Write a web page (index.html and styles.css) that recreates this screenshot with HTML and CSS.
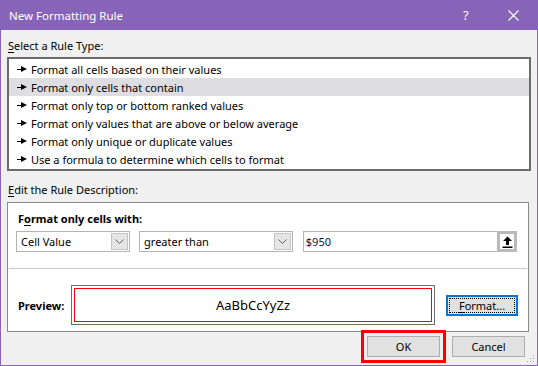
FILE: index.html
```html
<!DOCTYPE html>
<html lang="en">
  <head>
    <meta charset="utf-8" />
    <title>New Formatting Rule</title>
    <link rel="stylesheet" href="styles.css">
  </head>
  <body>
    <div class="dialog">
      <header class="titlebar">
        <span class="title">New Formatting Rule</span>
        <span class="title-help">?</span>
        <span class="title-close">
          <svg width="11" height="11" viewBox="0 0 11 11"><path d="M0.5 0.5L10.5 10.5M10.5 0.5L0.5 10.5" stroke="#fff" stroke-width="1.1" fill="none"/></svg>
        </span>
      </header>

      <div class="dialog-body">
        <div class="caption"><u>S</u>elect a Rule Type:</div>
        <ul class="rule-list">
          <li class="rule"><span class="rule-arrow"></span>Format all cells based on their values</li>
          <li class="rule selected"><span class="rule-arrow"></span>Format only cells that contain</li>
          <li class="rule"><span class="rule-arrow"></span>Format only top or bottom ranked values</li>
          <li class="rule"><span class="rule-arrow"></span>Format only values that are above or below average</li>
          <li class="rule"><span class="rule-arrow"></span>Format only unique or duplicate values</li>
          <li class="rule"><span class="rule-arrow"></span>Use a formula to determine which cells to format</li>
        </ul>

        <div class="caption caption-edit"><u>E</u>dit the Rule Description:</div>
        <div class="desc-box">
          <div class="desc-top">
            <div class="desc-heading">F<u>o</u>rmat only cells with:</div>
            <div class="desc-controls">
              <div class="combo combo-field">
                <span class="combo-text">Cell Value</span>
                <span class="combo-btn"><svg width="9" height="5" viewBox="0 0 9 5"><path d="M0.5 0.5L4.5 4.5L8.5 0.5" stroke="#606060" fill="none"/></svg></span>
              </div>
              <div class="combo combo-op">
                <span class="combo-text">greater than</span>
                <span class="combo-btn"><svg width="9" height="5" viewBox="0 0 9 5"><path d="M0.5 0.5L4.5 4.5L8.5 0.5" stroke="#606060" fill="none"/></svg></span>
              </div>
              <div class="ref-input">
                <span class="ref-text">$950</span>
                <span class="ref-btn"><svg width="11" height="12" viewBox="0 0 11 12"><path d="M5.5 0.5L10 5H7V9H4V5H1Z" fill="#000"/><rect x="0.5" y="10.5" width="10" height="1.5" fill="#000"/></svg></span>
              </div>
            </div>
          </div>
          <div class="desc-preview">
            <span class="preview-label">Preview:</span>
            <div class="preview-box">
              <div class="preview-inner">AaBbCcYyZz</div>
            </div>
            <button class="btn btn-format"><span class="focus-rect"><u>F</u>ormat...</span></button>
          </div>
        </div>

        <div class="dialog-buttons">
          <button class="btn btn-ok">OK</button>
          <button class="btn btn-cancel">Cancel</button>
        </div>
      </div>

      <svg class="grip" width="8" height="8" viewBox="0 0 8 8">
        <rect x="6" y="0" width="1" height="1" fill="#a0a0a0"/>
        <rect x="3" y="3" width="1" height="1" fill="#a0a0a0"/>
        <rect x="6" y="3" width="1" height="1" fill="#a0a0a0"/>
        <rect x="0" y="6" width="1" height="1" fill="#a0a0a0"/>
        <rect x="3" y="6" width="1" height="1" fill="#a0a0a0"/>
        <rect x="6" y="6" width="1" height="1" fill="#a0a0a0"/>
      </svg>
    </div>
  </body>
</html>
```

FILE: styles.css
```css
html, body {
  margin: 0;
  padding: 0;
}

body {
  font-family: "Noto Sans", "Open Sans", sans-serif;
  font-size: 11px;
  color: #000;
  background: #f0f0f0;
}

u {
  text-decoration-thickness: 1px;
  text-underline-offset: 2px;
}

.dialog {
  position: relative;
  width: 538px;
  height: 366px;
  box-sizing: border-box;
  border: 1px solid #8764b8;
  border-top: none;
  background: #f0f0f0;
}

.titlebar {
  display: flex;
  align-items: center;
  height: 30px;
  margin: 0 -1px;
  padding-left: 9px;
  background: #8764b8;
  color: #fff;
  font-size: 11.5px;
}

.title {
  flex: 1;
}

.title-help {
  width: 12px;
  margin-right: 33px;
  font-size: 13px;
}

.title-close {
  display: flex;
  margin-right: 19px;
}

.dialog-body {
  padding: 8px 11px 0 6px;
}

.caption {
  line-height: 16px;
  padding-left: 1px;
}

.rule-list {
  list-style: none;
  margin: 3px 0 0;
  padding: 1px 0 1px;
  height: 108px;
  background: #fff;
  border: 2px solid #6b6b6b;
  width: 520px;
}

.rule {
  display: flex;
  align-items: center;
  height: 18px;
  padding-left: 8px;
}

.rule.selected {
  background: #dedee2;
}

.rule-arrow {
  position: relative;
  width: 10px;
  height: 7px;
  margin-right: 4px;
}

.rule-arrow::before {
  content: "";
  position: absolute;
  left: 0;
  top: 3px;
  width: 5px;
  height: 1px;
  background: #000;
}

.rule-arrow::after {
  content: "";
  position: absolute;
  left: 4px;
  top: 0;
  border-left: 6px solid #000;
  border-top: 3.5px solid transparent;
  border-bottom: 3.5px solid transparent;
}

.caption-edit {
  margin-top: 11px;
}

.desc-box {
  margin-top: 4px;
  width: 522px;
  box-sizing: border-box;
  height: 130px;
  background: #fff;
  border: 1px solid #8a8a8a;
}

.desc-top {
  padding: 8px 10px 16px 8px;
  border-bottom: 1px solid #c8c8c8;
  margin: 0 1px;
}

.desc-heading {
  font-weight: bold;
  line-height: 16px;
  padding-left: 1px;
  margin-bottom: 4px;
}

.desc-controls {
  display: flex;
  gap: 9px;
  margin-left: -1px;
}

.combo {
  display: flex;
  align-items: center;
  height: 21px;
  box-sizing: border-box;
  border: 1px solid #b4b4b4;
  background: #fff;
  padding: 0 1px 0 4px;
}

.combo-field {
  width: 115px;
}

.combo-op {
  width: 155px;
}

.combo-text {
  flex: 1;
}

.combo-btn {
  display: flex;
  align-items: center;
  justify-content: center;
  width: 15px;
  height: 15px;
  background: #e5e5e5;
  border: 1px solid #c4c4c4;
}

.ref-input {
  display: flex;
  align-items: center;
  width: 216px;
  height: 21px;
  box-sizing: border-box;
  margin-left: 1px;
  border: 1px solid #b4b4b4;
  border-right: none;
  background: #fff;
  padding-left: 2px;
}

.ref-text {
  flex: 1;
  color: #10104a;
}

.ref-btn {
  display: flex;
  align-items: center;
  justify-content: center;
  width: 20px;
  height: 21px;
  box-sizing: border-box;
  border: 3px solid #bababa;
  background: #fff;
}

.desc-preview {
  display: flex;
  align-items: center;
  padding: 16px 0 0 10px;
}

.preview-label {
  font-weight: bold;
  width: 53px;
}

.preview-box {
  width: 364px;
  height: 40px;
  box-sizing: border-box;
  border: 1px solid #6e6e6e;
  padding: 2px;
}

.preview-inner {
  height: 100%;
  box-sizing: border-box;
  border: 1px solid #ff0000;
  display: flex;
  align-items: center;
  justify-content: center;
  font-size: 13px;
}

.btn {
  font-family: inherit;
  font-size: inherit;
  color: #000;
  background: #e1e1e1;
  border: 1px solid #adadad;
  height: 21px;
  padding: 0;
  box-sizing: border-box;
}

.btn-format {
  width: 72px;
  margin-left: 11px;
  border: 2px solid #0078d7;
  padding: 1px;
}

.focus-rect {
  display: flex;
  align-items: center;
  justify-content: center;
  height: 100%;
  box-sizing: border-box;
  border: 1px dotted #000;
}

.dialog-buttons {
  display: flex;
  justify-content: flex-end;
  gap: 12px;
  margin-top: 4px;
  padding-right: 1px;
}

.btn-ok,
.btn-cancel {
  width: 73px;
  height: 21px;
}

.btn-ok {
  outline: 3px solid #ff0000;
  outline-offset: 3px;
}

.grip {
  position: absolute;
  right: 2px;
  bottom: 2px;
}
```
